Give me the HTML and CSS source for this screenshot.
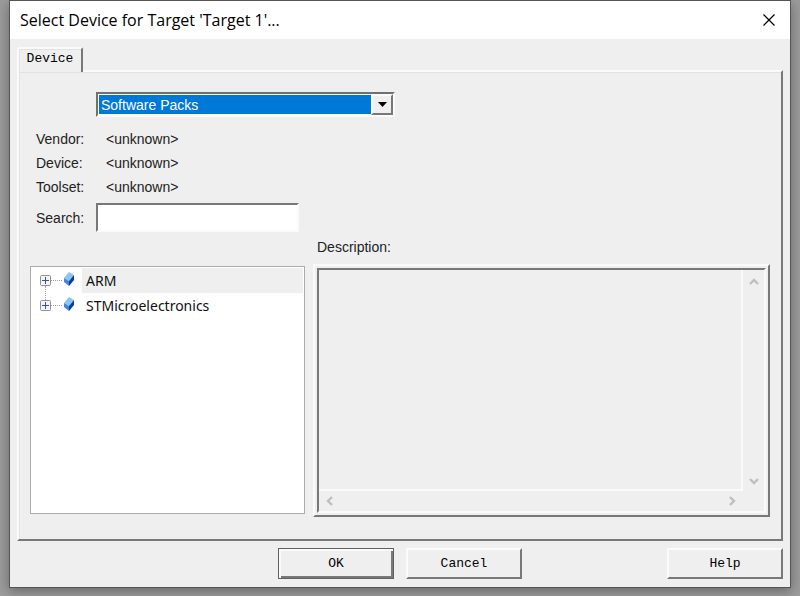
FILE: index.html
```
<!DOCTYPE html>
<html lang="en">

<head>
    <meta charset="UTF-8">
    <meta name="viewport" content="width=device-width, initial-scale=1.0">
    <title>Select Device for Target 'Target 1'...</title>
    <link rel="stylesheet" href="styles.css">
</head>

<body>
    <div class="window">
        <header class="title-bar">
            <h1 class="title">Select Device for Target 'Target 1'...</h1>
            <button class="close" type="button" aria-label="Close">
                <svg width="12" height="12" viewBox="0 0 12 12">
                    <path d="M0.5 0.5L11.5 11.5M11.5 0.5L0.5 11.5" fill="none" stroke="#000" stroke-width="1.2" />
                </svg>
            </button>
        </header>

        <form class="dialog">
            <div class="tabs">
                <button class="tab" type="button">Device</button>
            </div>

            <div class="panel">
                <div class="fields">
                    <div class="combo">
                        <select class="combo-select" aria-label="Device database">
                            <option>Software Packs</option>
                        </select>
                        <span class="combo-arrow">
                            <svg width="9" height="5" viewBox="0 0 9 5">
                                <path d="M0 0H9L4.5 5Z" fill="#000" />
                            </svg>
                        </span>
                    </div>
                    <dl class="info">
                        <dt>Vendor:</dt>
                        <dd>&lt;unknown&gt;</dd>
                        <dt>Device:</dt>
                        <dd>&lt;unknown&gt;</dd>
                        <dt>Toolset:</dt>
                        <dd>&lt;unknown&gt;</dd>
                    </dl>
                    <div class="search">
                        <label for="search">Search:</label>
                        <input type="text" id="search" name="search" class="search-input">
                    </div>
                </div>

                <label class="description-label" for="description">Description:</label>

                <ul class="tree">
                    <li class="tree-item selected">
                        <button class="expander" type="button" aria-label="Expand ARM">
                            <svg width="11" height="11" viewBox="0 0 11 11">
                                <rect x="0.5" y="0.5" width="10" height="10" rx="1" fill="#f4f4f4" stroke="#919191" />
                                <path d="M2 5.5H9M5.5 2V9" stroke="#3a4fa0" />
                            </svg>
                        </button>
                        <span class="branch"></span>
                        <svg class="chip" width="12" height="14" viewBox="0 0 12 14">
                            <path d="M6 0L11 3L6 9L1 6Z" fill="#8cc4f4" />
                            <path d="M1 6L6 9V14L1 10Z" fill="#3f86dc" />
                            <path d="M6 9L11 3V8L6 14Z" fill="#0c3c9c" />
                        </svg>
                        <span class="tree-text">ARM</span>
                    </li>
                    <li class="tree-item">
                        <button class="expander" type="button" aria-label="Expand STMicroelectronics">
                            <svg width="11" height="11" viewBox="0 0 11 11">
                                <rect x="0.5" y="0.5" width="10" height="10" rx="1" fill="#f4f4f4" stroke="#919191" />
                                <path d="M2 5.5H9M5.5 2V9" stroke="#3a4fa0" />
                            </svg>
                        </button>
                        <span class="branch"></span>
                        <svg class="chip" width="12" height="14" viewBox="0 0 12 14">
                            <path d="M6 0L11 3L6 9L1 6Z" fill="#8cc4f4" />
                            <path d="M1 6L6 9V14L1 10Z" fill="#3f86dc" />
                            <path d="M6 9L11 3V8L6 14Z" fill="#0c3c9c" />
                        </svg>
                        <span class="tree-text">STMicroelectronics</span>
                    </li>
                </ul>

                <div class="frame">
                    <div class="description">
                        <textarea id="description" class="description-text" readonly></textarea>
                        <div class="scroll vertical">
                            <button class="scroll-button" type="button" aria-label="Scroll up" disabled>
                                <svg width="10" height="8" viewBox="0 0 10 8">
                                    <path d="M1 6L5 2L9 6" fill="none" stroke="#bfbfbf" stroke-width="2.4" />
                                </svg>
                            </button>
                            <button class="scroll-button" type="button" aria-label="Scroll down" disabled>
                                <svg width="10" height="8" viewBox="0 0 10 8">
                                    <path d="M1 2L5 6L9 2" fill="none" stroke="#bfbfbf" stroke-width="2.4" />
                                </svg>
                            </button>
                        </div>
                        <div class="scroll horizontal">
                            <button class="scroll-button" type="button" aria-label="Scroll left" disabled>
                                <svg width="8" height="10" viewBox="0 0 8 10">
                                    <path d="M6 1L2 5L6 9" fill="none" stroke="#bfbfbf" stroke-width="2.4" />
                                </svg>
                            </button>
                            <button class="scroll-button" type="button" aria-label="Scroll right" disabled>
                                <svg width="8" height="10" viewBox="0 0 8 10">
                                    <path d="M2 1L6 5L2 9" fill="none" stroke="#bfbfbf" stroke-width="2.4" />
                                </svg>
                            </button>
                        </div>
                    </div>
                </div>
            </div>

            <div class="buttons">
                <button class="button default" type="submit">OK</button>
                <button class="button" type="button">Cancel</button>
                <button class="button help" type="button">Help</button>
            </div>
        </form>
    </div>
</body>

</html>
```
FILE: styles.css
```
* {
    box-sizing: border-box;
}

body {
    margin: 0;
    padding: 0 9px 8px;
    min-height: 100vh;
    display: flex;
    background-color: #9c9c9c;
    font-family: "Liberation Sans", Arial, sans-serif;
    font-size: 14px;
    line-height: 16px;
    color: #222;
}

button,
input,
select,
textarea {
    font: inherit;
    color: inherit;
    margin: 0;
    padding: 0;
    border: 0;
    border-radius: 0;
    background: none;
    outline: none;
}

.window {
    flex: 1;
    display: flex;
    flex-direction: column;
    border: 1px solid #555;
    background-color: #efefef;
    box-shadow: 0 3px 12px rgba(0, 0, 0, 0.35);
}

.title-bar {
    display: flex;
    justify-content: space-between;
    align-items: center;
    height: 38px;
    padding: 0 14px 0 10px;
    background-color: #fff;
}

.title {
    margin: 0;
    font-family: "Open Sans", "Noto Sans", sans-serif;
    font-size: 16px;
    font-weight: normal;
    line-height: 20px;
    color: #000;
}

.close {
    display: flex;
    padding: 1px;
}

.dialog {
    flex: 1;
    display: flex;
    flex-direction: column;
    padding: 8px 7px;
}

.tabs {
    display: flex;
}

/* the tab covers the top edge of the panel */
.tab {
    position: relative;
    height: 25px;
    width: 66px;
    margin-bottom: -2px;
    padding-bottom: 3px;
    background-color: #efefef;
    border: 2px solid #fafafa;
    border-right: 2px solid #787878;
    border-bottom: 0;
    border-radius: 3px 2px 0 0;
    box-shadow: inset 1px 1px #e2e2e2;
    font-family: "Liberation Mono", monospace;
    font-size: 13px;
    color: #000;
}

.panel {
    flex: 1;
    display: grid;
    grid-template-columns: 275px 1fr;
    grid-template-rows: auto auto 1fr;
    column-gap: 8px;
    padding: 20px 11px 22px;
    border: 2px solid #fafafa;
    border-right-color: #787878;
    border-bottom-color: #787878;
    box-shadow: inset 1px 1px #e2e2e2;
}

.fields {
    grid-column: 1 / 3;
    padding-left: 6px;
}

.combo {
    position: relative;
    width: 299px;
    height: 25px;
    margin-left: 60px;
    border: 2px solid #707070;
    border-right-color: #fafafa;
    border-bottom-color: #fafafa;
    background-color: #fff;
}

.combo-select {
    appearance: none;
    width: 273px;
    height: 19px;
    margin: 1px;
    padding-left: 2px;
    display: block;
    background-color: #0078d7;
    color: #fff;
}

.combo-arrow {
    position: absolute;
    top: 0;
    right: 0;
    width: 22px;
    height: 21px;
    display: flex;
    align-items: center;
    justify-content: center;
    background-color: #efefef;
    border: 2px solid #fafafa;
    border-right-color: #787878;
    border-bottom-color: #787878;
    pointer-events: none;
}

.info {
    display: grid;
    grid-template-columns: 60px 1fr;
    row-gap: 8px;
    margin: 14px 0 8px;
}

.info dd {
    margin: 0;
    padding-left: 10px;
}

.search {
    display: flex;
    align-items: center;
}

.search label {
    width: 60px;
}

.search-input {
    width: 203px;
    height: 29px;
    padding: 0 4px;
    background-color: #fff;
    border: 2px solid #787878;
    border-right-color: #fafafa;
    border-bottom-color: #fafafa;
}

.description-label {
    grid-column: 2;
    justify-self: start;
    padding: 7px 4px 9px;
}

.tree {
    grid-column: 1;
    list-style-type: none;
    margin: 2px 0 3px;
    padding: 1px 1px 1px 9px;
    background-color: #fff;
    border: 1px solid #aaaab2;
}

.tree-item {
    position: relative;
    display: flex;
    align-items: center;
    height: 25px;
    font-family: "Noto Sans", "Open Sans", sans-serif;
    color: #111;
}

/* dotted line up to the previous item */
.tree-item + .tree-item::before {
    content: "";
    position: absolute;
    left: 5px;
    top: -7px;
    height: 14px;
    border-left: 1px dotted #a0a0a0;
}

.expander {
    display: flex;
}

.branch {
    width: 11px;
    border-top: 1px dotted #a0a0a0;
}

.chip {
    margin: 0 7px 4px 1px;
}

.tree-text {
    flex: 1;
    padding-left: 4px;
    line-height: 25px;
}

.selected .tree-text {
    background-color: #efefef;
}

.frame {
    grid-column: 2;
    display: flex;
    padding: 2px;
    border: 2px solid #fafafa;
    border-right-color: #787878;
    border-bottom-color: #787878;
}

.description {
    flex: 1;
    display: grid;
    grid-template-columns: 1fr 21px;
    grid-template-rows: 1fr 20px;
    border: 2px solid #787878;
    border-right-color: #fafafa;
    border-bottom-color: #fafafa;
}

.description-text {
    width: 100%;
    height: 100%;
    resize: none;
    border: 1px solid #fafafa;
    border-width: 0 2px 2px 0;
}

.scroll {
    display: flex;
    justify-content: space-between;
    align-items: center;
}

.vertical {
    flex-direction: column;
    padding: 8px 0 6px;
}

.horizontal {
    padding: 0 7px;
}

.scroll-button {
    display: flex;
}

.buttons {
    display: flex;
    gap: 12px;
    padding-top: 7px;
    padding-left: 261px;
}

.button {
    width: 116px;
    height: 31px;
    border: 2px solid #fafafa;
    border-right-color: #787878;
    border-bottom-color: #787878;
    font-family: "Liberation Mono", monospace;
    font-size: 13px;
    color: #000;
}

.default {
    border: 1px solid #606060;
    box-shadow: inset 2px 2px #fafafa, inset -2px -2px #787878;
}

.help {
    margin-left: auto;
}
```
